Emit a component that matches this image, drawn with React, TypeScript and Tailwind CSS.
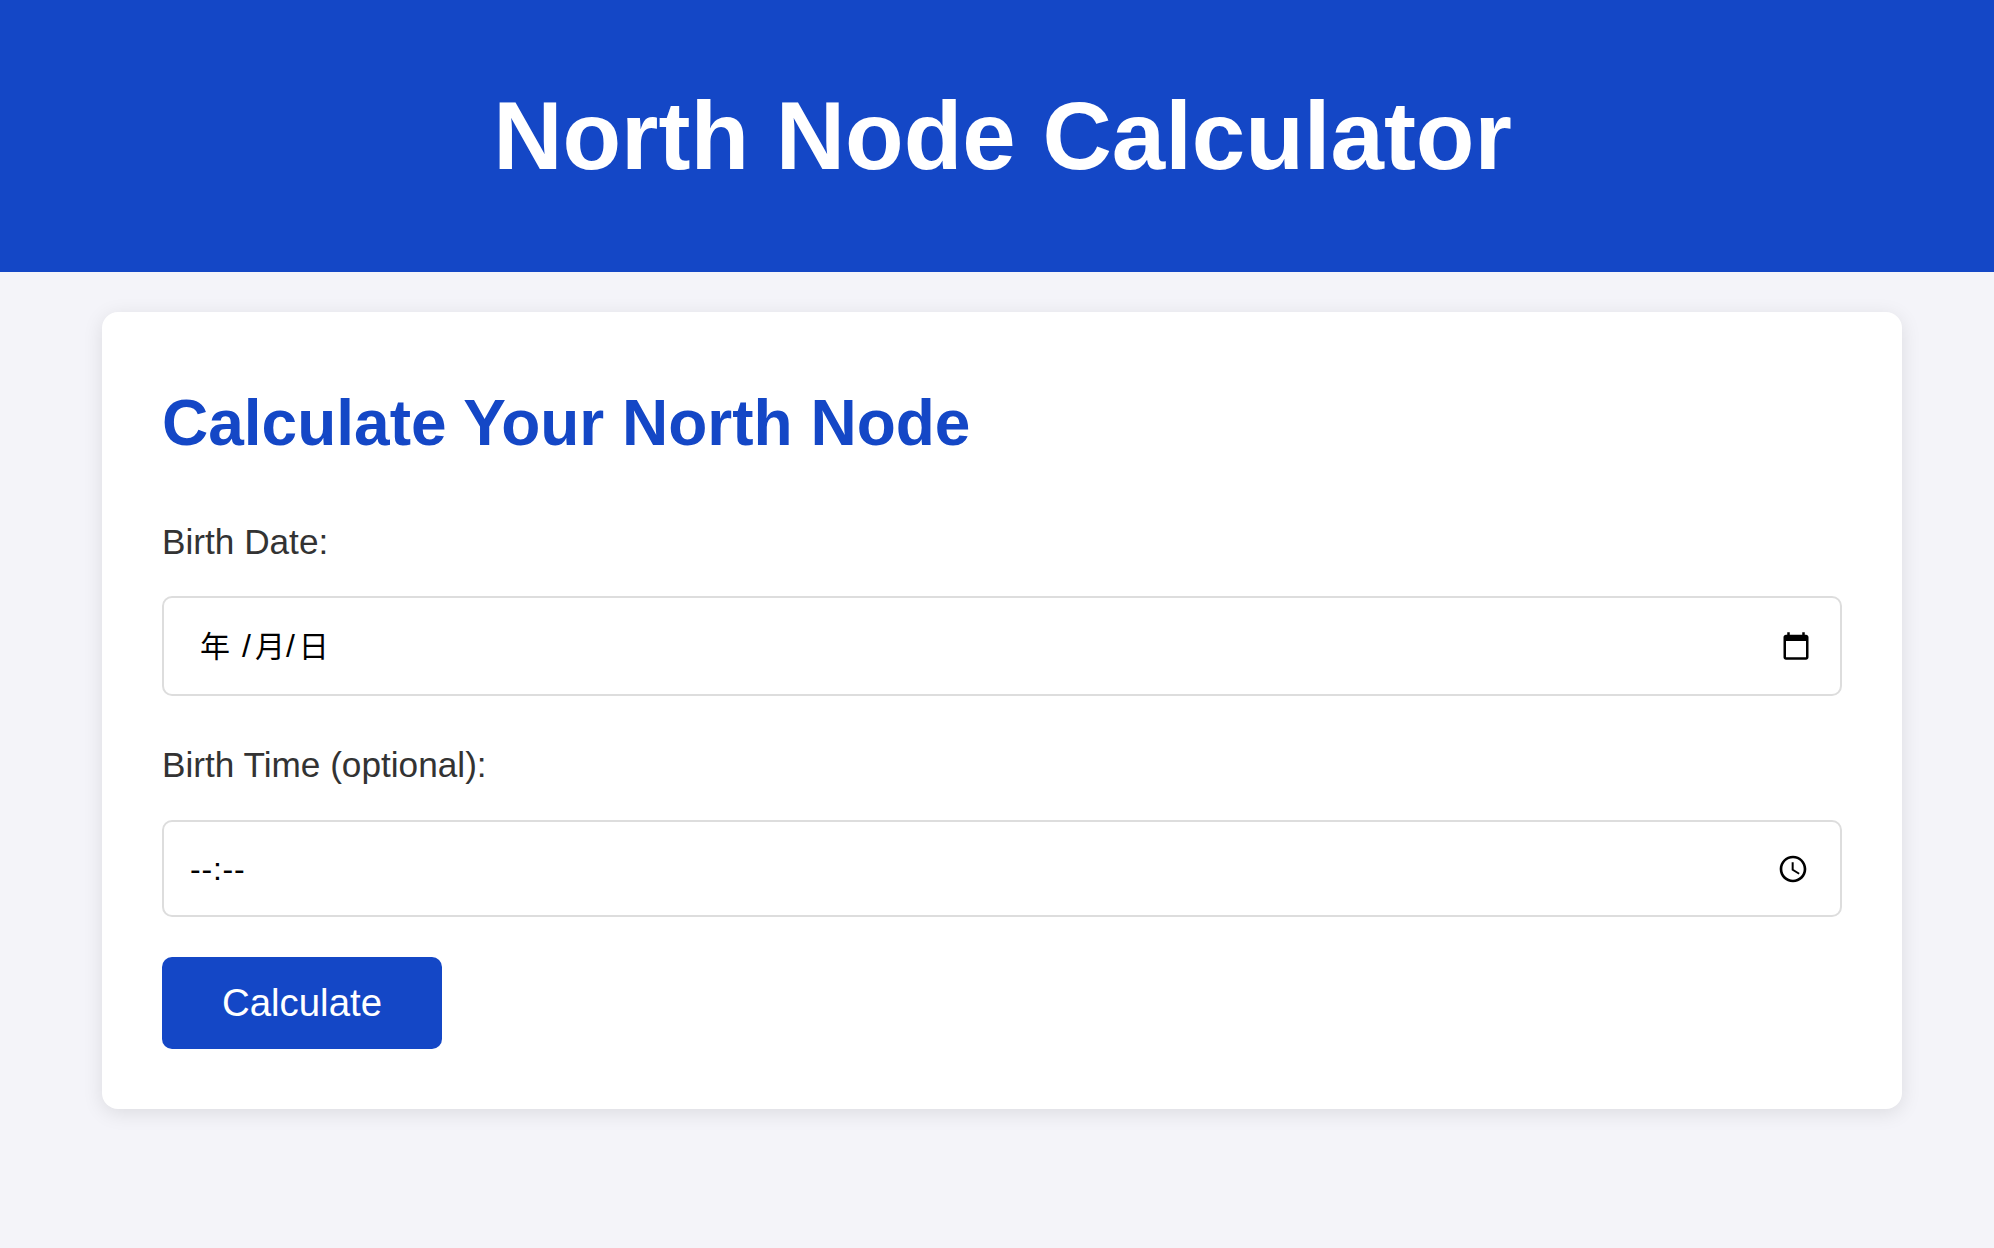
export default function App() {
  const font = "[font-family:'Liberation_Sans','Noto_Sans_CJK_SC',sans-serif]";
  return (
    <div className={`min-h-[1248px] bg-[#f4f4f9] ${font}`}>
      <header className="flex h-[272px] items-center justify-center bg-[#1447c6] pl-[11px]">
        <h1 className="text-[96px] leading-none font-bold text-white">North Node Calculator</h1>
      </header>
      <main className="ml-[102px] mt-10 w-[1800px] rounded-2xl bg-white px-[60px] pt-[74px] pb-[60px] shadow-[0_4px_20px_rgba(0,0,0,0.1)]">
        <h2 className="text-[64px] leading-[74px] font-bold text-[#1447c6]">Calculate Your North Node</h2>
        <label className="mt-[62px] block text-[35.2px] leading-10 text-[#333]">Birth Date:</label>
        <div className="mt-[34px] flex h-[100px] w-[1680px] items-center justify-between rounded-[10px] border-2 border-[#ddd] pl-9 pr-[29px] text-[32px] text-black">
          <span className="flex items-baseline">
            <span className="text-[30px]">年</span>
            <span className="ml-[12px]">/</span>
            <span className="ml-[4px] text-[30px]">月</span>
            <span className="ml-[1px]">/</span>
            <span className="ml-[4px] text-[30px]">日</span>
          </span>
          <svg width="30" height="30" viewBox="0 0 24 24" fill="currentColor">
            <path d="M20 3h-1V1h-2v2H7V1H5v2H4c-1.1 0-2 .9-2 2v16c0 1.1.9 2 2 2h16c1.1 0 2-.9 2-2V5c0-1.1-.9-2-2-2zm0 18H4V8h16v13z" />
          </svg>
        </div>
        <label className="mt-[49px] block text-[35.2px] leading-10 text-[#333]">Birth Time (optional):</label>
        <div className="mt-[35px] flex h-[97px] w-[1680px] items-center justify-between rounded-[10px] border-2 border-[#ddd] pl-[26px] pr-[31px] text-[32px] text-black">
          <span className="tracking-[0.8px]">--:--</span>
          <svg width="32" height="32" viewBox="0 0 24 24" fill="currentColor">
            <path d="M11.99 2C6.47 2 2 6.48 2 12s4.47 10 9.99 10C17.52 22 22 17.52 22 12S17.52 2 11.99 2zM12 20c-4.42 0-8-3.58-8-8s3.58-8 8-8 8 3.58 8 8-3.58 8-8 8zm.5-13H11v6l5.25 3.15.75-1.23-4.5-2.67z" />
          </svg>
        </div>
        <button className="mt-10 block h-[92px] w-[280px] rounded-[10px] bg-[#1447c6] text-[38.4px] text-white">Calculate</button>
      </main>
    </div>
  );
}
